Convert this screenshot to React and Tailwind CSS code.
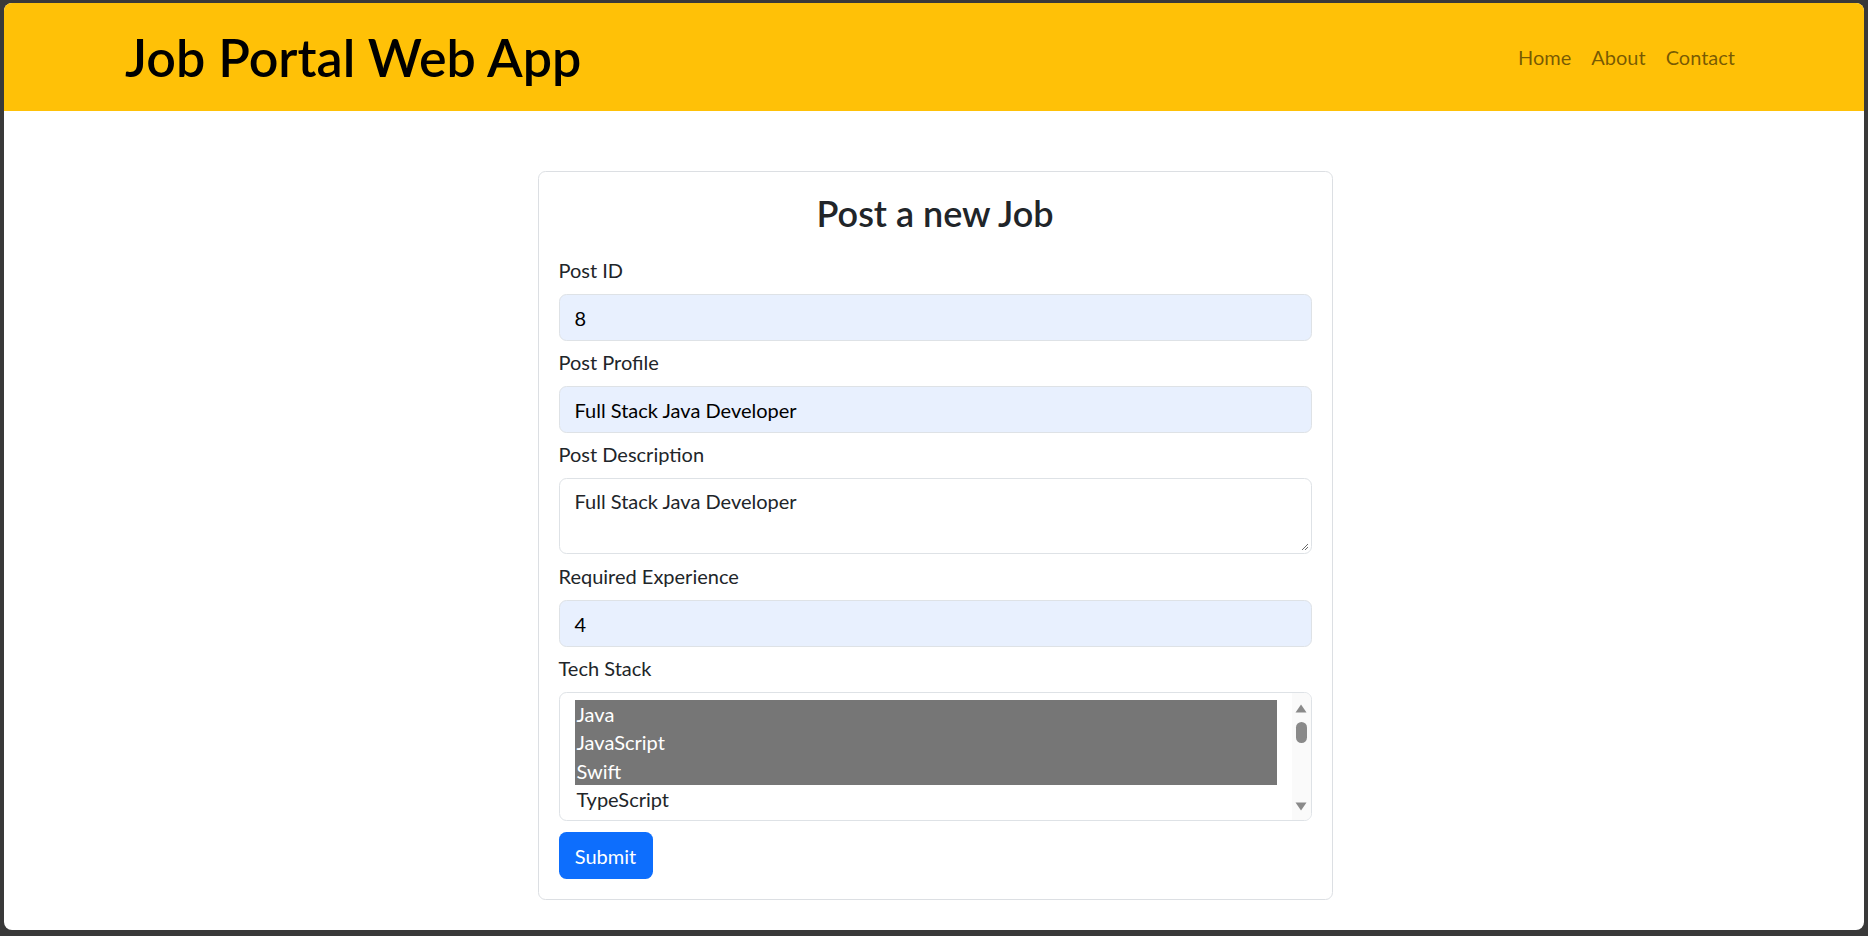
import React from "react";

function Field({ label, children, mb = "mb-[6px]" }) {
  return (
    <div className={mb}>
      <label className="block text-[20px] leading-[30px] text-[#212529] mb-[9px]">{label}</label>
      {children}
    </div>
  );
}

function FilledInput({ value }) {
  return (
    <div className="h-[47px] w-full rounded-[7.5px] border border-[#dee2e6] bg-[#e8f0fe] px-[15px] flex items-center text-[20px] text-black">
      {value}
    </div>
  );
}

export default function App() {
  const options = [
    { name: "Java", sel: true },
    { name: "JavaScript", sel: true },
    { name: "Swift", sel: true },
    { name: "TypeScript", sel: false },
  ];
  return (
    <div className="w-[1868px] h-[936px] bg-[#393939] pt-[3px] px-[4px] pb-[6px] font-['Lato',sans-serif]">
      <div className="h-[927px] w-full bg-white rounded-[8px] overflow-hidden flex flex-col">
        <header className="h-[108px] bg-[#ffc107] flex items-center justify-between pl-[121px] pr-[119px]">
          <h1 className="text-[52px] leading-[60px] font-semibold text-black">Job Portal Web App</h1>
          <nav className="flex items-center">
            <a className="px-[10px] text-[20px] leading-[30px] text-[rgba(0,0,0,0.55)]">Home</a>
            <a className="px-[10px] text-[20px] leading-[30px] text-[rgba(0,0,0,0.55)]">About</a>
            <a className="px-[10px] text-[20px] leading-[30px] text-[rgba(0,0,0,0.55)]">Contact</a>
          </nav>
        </header>
        <main className="flex justify-center pt-[60px] pl-[2px]">
          <div className="w-[795px] border border-[#dcdfe3] rounded-[7.5px] p-[20px]">
            <h3 className="text-center text-[36px] leading-[42px] font-semibold text-[#212529] mb-[21px]">Post a new Job</h3>
            <Field label="Post ID">
              <FilledInput value="8" />
            </Field>
            <Field label="Post Profile">
              <FilledInput value="Full Stack Java Developer" />
            </Field>
            <Field label="Post Description" mb="mb-[7px]">
              <div className="relative h-[76px] w-full rounded-[7.5px] border border-[#dee2e6] bg-white px-[15px] py-[7px] text-[20px] leading-[30px] text-[#212529]">
                Full Stack Java Developer
                <svg className="absolute right-[2px] bottom-[2px]" width="9" height="9" viewBox="0 0 9 9">
                  <path d="M8 2 L2 8 M8 5 L5 8" stroke="#6b6b6b" strokeWidth="1" />
                </svg>
              </div>
            </Field>
            <Field label="Required Experience">
              <FilledInput value="4" />
            </Field>
            <Field label="Tech Stack" mb="mb-[11px]">
              <div className="h-[129px] w-full rounded-[7.5px] border border-[#dee2e6] bg-white flex overflow-hidden">
                <div className="flex-1 pl-[15px] pr-[15px] pt-[7px]">
                  {options.map((o) => (
                    <div
                      key={o.name}
                      className={
                        "h-[28.33px] leading-[28px] px-[2px] text-[20px] " +
                        (o.sel ? "bg-[#767676] text-white" : "text-[#212529]")
                      }
                    >
                      {o.name}
                    </div>
                  ))}
                </div>
                <div className="w-[19px] bg-[#fafafa] relative">
                  <svg className="absolute left-[3px] top-[11px]" width="12" height="9" viewBox="0 0 12 9">
                    <path d="M6 0.5 L11.5 8.5 L0.5 8.5 Z" fill="#8a8a8a" />
                  </svg>
                  <div className="absolute left-[4px] top-[29px] w-[11px] h-[21px] rounded-full bg-[#8a8a8a]" />
                  <svg className="absolute left-[3px] top-[109px]" width="12" height="9" viewBox="0 0 12 9">
                    <path d="M0.5 0.5 L11.5 0.5 L6 8.5 Z" fill="#8a8a8a" />
                  </svg>
                </div>
              </div>
            </Field>
            <button className="h-[47px] w-[94px] rounded-[7.5px] bg-[#0d6efd] text-white text-[20px] leading-[30px]">Submit</button>
          </div>
        </main>
      </div>
    </div>
  );
}
